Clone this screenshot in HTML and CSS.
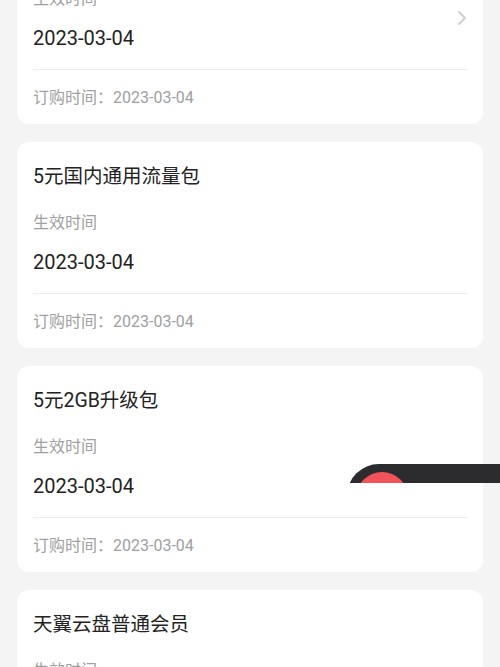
FILE: index.html
```html
<!DOCTYPE html>
<html lang="zh-CN">
<head>
<meta charset="utf-8">
<title>订购记录</title>
<link rel="stylesheet" href="styles.css">
</head>
<body>
<div class="list">
  <div class="card card-first">
    <div class="title">天翼云盘会员</div>
    <div class="mid">
      <div class="mid-body">
        <div class="label">生效时间</div>
        <div class="date">2023-03-04</div>
      </div>
      <svg class="chev" width="10" height="16" viewBox="0 0 10 16"><path d="M2 2 L8 8 L2 14" fill="none" stroke="#cfcfcf" stroke-width="2" stroke-linecap="round" stroke-linejoin="round"/></svg>
    </div>
    <div class="divider"></div>
    <div class="order">订购时间：2023-03-04</div>
  </div>
  <div class="card">
    <div class="title">5元国内通用流量包</div>
    <div class="mid">
      <div class="mid-body">
        <div class="label">生效时间</div>
        <div class="date">2023-03-04</div>
      </div>
    </div>
    <div class="divider"></div>
    <div class="order">订购时间：2023-03-04</div>
  </div>
  <div class="card">
    <div class="title">5元2GB升级包</div>
    <div class="mid">
      <div class="mid-body">
        <div class="label">生效时间</div>
        <div class="date">2023-03-04</div>
      </div>
    </div>
    <div class="divider"></div>
    <div class="order">订购时间：2023-03-04</div>
  </div>
  <div class="card">
    <div class="title">天翼云盘普通会员</div>
    <div class="mid">
      <div class="mid-body">
        <div class="label">生效时间</div>
        <div class="date">2023-03-04</div>
      </div>
    </div>
    <div class="divider"></div>
    <div class="order">订购时间：2023-03-04</div>
  </div>
</div>
<div class="float-clip">
  <div class="float-pill"><div class="float-dot"></div></div>
</div>
</body>
</html>
```

FILE: styles.css
```css
html, body {
  margin: 0;
  padding: 0;
  background: #f4f4f4;
  font-family: Roboto, "Noto Sans CJK SC", sans-serif;
  overflow: hidden;
}
.list {
  display: flex;
  flex-direction: column;
  gap: 18px;
  padding: 0 17px;
}
.card {
  background: #fff;
  border-radius: 12px;
  padding: 21px 16px 14px;
  height: 206px;
  box-sizing: border-box;
}
.card-first {
  margin-top: -82px;
}
.title {
  font-size: 19.5px;
  line-height: 28px;
  color: #222;
}
.mid {
  display: flex;
  align-items: center;
  justify-content: space-between;
  margin-top: 20px;
}
.mid-body {
  display: flex;
  flex-direction: column;
}
.label {
  font-size: 16px;
  line-height: 24px;
  color: #a0a0a0;
}
.date {
  margin-top: 13px;
  font-size: 20px;
  line-height: 28px;
  color: #222;
}
.chev {
  margin-bottom: 4px;
}
.divider {
  height: 1px;
  background: #ebebeb;
  margin-top: 17px;
}
.order {
  margin-top: 16px;
  font-size: 16px;
  line-height: 24px;
  color: #a0a0a0;
}
.float-clip {
  position: fixed;
  left: 347px;
  top: 464px;
  width: 153px;
  height: 19px;
  overflow: hidden;
}
.float-pill {
  width: 200px;
  height: 64px;
  border-radius: 32px;
  background: #2c2c2e;
  padding: 8px 0 0 9px;
  box-sizing: border-box;
}
.float-dot {
  width: 52px;
  height: 52px;
  border-radius: 50%;
  background: #f2525a;
}
```
